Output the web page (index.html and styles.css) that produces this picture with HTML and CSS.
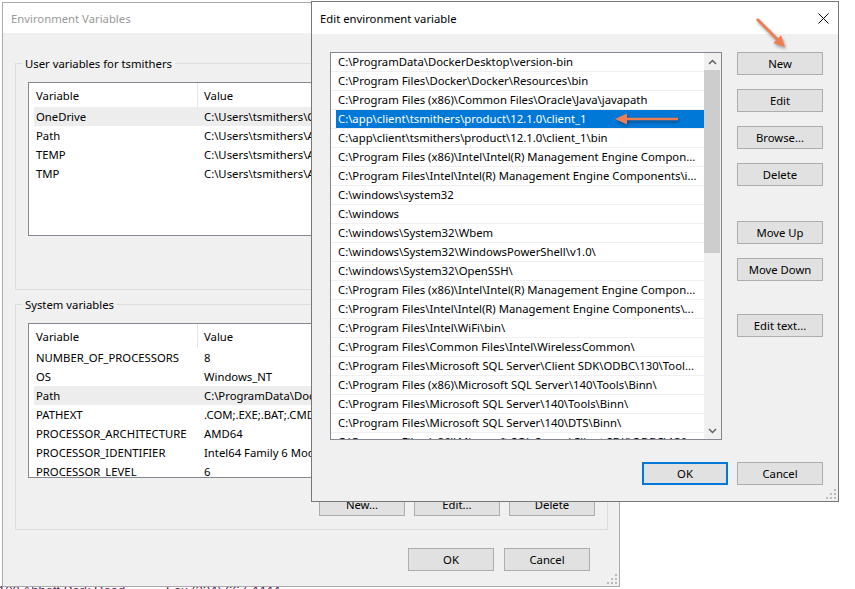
FILE: index.html
```html
<!DOCTYPE html>
<html lang="en">

<head>
    <meta charset="UTF-8">
    <meta name="viewport" content="width=device-width, initial-scale=1.0">
    <link rel="stylesheet" href="styles.css">
    <title>Environment Variables</title>
</head>

<body>
    <div class="page">
        <div class="address">
            <span class="street">100 Abbott Park Road</span>
            <span>Fax (224) 667-4444</span>
        </div>
    </div>

    <div class="window env-window">
        <div class="titlebar">
            <span class="title">Environment Variables</span>
        </div>
        <div class="env-body">
            <div class="group user-group">
                <span class="group-label">User variables for tsmithers</span>
                <div class="varlist">
                    <div class="var-head"><span class="col-name">Variable</span><span class="col-value">Value</span></div>
                    <div class="var-row hot"><span class="col-name">OneDrive</span><span class="col-value">C:\Users\tsmithers\OneDrive</span></div>
                    <div class="var-row"><span class="col-name">Path</span><span class="col-value">C:\Users\tsmithers\AppData\Local\Microsoft\WindowsApps;</span></div>
                    <div class="var-row"><span class="col-name">TEMP</span><span class="col-value">C:\Users\tsmithers\AppData\Local\Temp</span></div>
                    <div class="var-row"><span class="col-name">TMP</span><span class="col-value">C:\Users\tsmithers\AppData\Local\Temp</span></div>
                </div>
                <div class="group-buttons">
                    <div class="btn">New...</div>
                    <div class="btn">Edit...</div>
                    <div class="btn">Delete</div>
                </div>
            </div>

            <div class="group system-group">
                <span class="group-label">System variables</span>
                <div class="varlist">
                    <div class="var-head"><span class="col-name">Variable</span><span class="col-value">Value</span></div>
                    <div class="var-row"><span class="col-name">NUMBER_OF_PROCESSORS</span><span class="col-value">8</span></div>
                    <div class="var-row"><span class="col-name">OS</span><span class="col-value">Windows_NT</span></div>
                    <div class="var-row hot"><span class="col-name">Path</span><span class="col-value">C:\ProgramData\DockerDesktop\version-bin;C:\Program Files\Docker</span></div>
                    <div class="var-row"><span class="col-name">PATHEXT</span><span class="col-value">.COM;.EXE;.BAT;.CMD;.VBS;.VBE;.JS;.JSE;.WSF;.WSH;.MSC</span></div>
                    <div class="var-row"><span class="col-name">PROCESSOR_ARCHITECTURE</span><span class="col-value">AMD64</span></div>
                    <div class="var-row"><span class="col-name">PROCESSOR_IDENTIFIER</span><span class="col-value">Intel64 Family 6 Model 142 Stepping 10, GenuineIntel</span></div>
                    <div class="var-row"><span class="col-name">PROCESSOR_LEVEL</span><span class="col-value">6</span></div>
                </div>
                <div class="group-buttons">
                    <div class="btn">New...</div>
                    <div class="btn">Edit...</div>
                    <div class="btn">Delete</div>
                </div>
            </div>

            <div class="env-footer">
                <div class="btn">OK</div>
                <div class="btn">Cancel</div>
            </div>
        </div>
        <svg class="grip" width="10" height="10" viewBox="0 0 10 10">
            <rect x="8" y="0" width="2" height="2" />
            <rect x="4" y="4" width="2" height="2" />
            <rect x="8" y="4" width="2" height="2" />
            <rect x="0" y="8" width="2" height="2" />
            <rect x="4" y="8" width="2" height="2" />
            <rect x="8" y="8" width="2" height="2" />
        </svg>
    </div>

    <div class="window edit-window">
        <div class="titlebar">
            <span class="title">Edit environment variable</span>
            <svg class="close-icon" width="11" height="11" viewBox="0 0 11 11">
                <path d="M0.5 0.5 L10.5 10.5 M10.5 0.5 L0.5 10.5" stroke="#000" stroke-width="1" fill="none" />
            </svg>
        </div>
        <div class="edit-body">
            <div class="edit-main">
                <div class="path-list">
                    <div class="path-rows">
                        <div class="path-row">C:\ProgramData\DockerDesktop\version-bin</div>
                        <div class="path-row">C:\Program Files\Docker\Docker\Resources\bin</div>
                        <div class="path-row">C:\Program Files (x86)\Common Files\Oracle\Java\javapath</div>
                        <div class="path-row selected">C:\app\client\tsmithers\product\12.1.0\client_1</div>
                        <div class="path-row">C:\app\client\tsmithers\product\12.1.0\client_1\bin</div>
                        <div class="path-row">C:\Program Files (x86)\Intel\Intel(R) Management Engine Compon...</div>
                        <div class="path-row">C:\Program Files\Intel\Intel(R) Management Engine Components\i...</div>
                        <div class="path-row">C:\windows\system32</div>
                        <div class="path-row">C:\windows</div>
                        <div class="path-row">C:\windows\System32\Wbem</div>
                        <div class="path-row">C:\windows\System32\WindowsPowerShell\v1.0\</div>
                        <div class="path-row">C:\windows\System32\OpenSSH\</div>
                        <div class="path-row">C:\Program Files (x86)\Intel\Intel(R) Management Engine Compon...</div>
                        <div class="path-row">C:\Program Files\Intel\Intel(R) Management Engine Components\...</div>
                        <div class="path-row">C:\Program Files\Intel\WiFi\bin\</div>
                        <div class="path-row">C:\Program Files\Common Files\Intel\WirelessCommon\</div>
                        <div class="path-row">C:\Program Files\Microsoft SQL Server\Client SDK\ODBC\130\Tool...</div>
                        <div class="path-row">C:\Program Files (x86)\Microsoft SQL Server\140\Tools\Binn\</div>
                        <div class="path-row">C:\Program Files\Microsoft SQL Server\140\Tools\Binn\</div>
                        <div class="path-row">C:\Program Files\Microsoft SQL Server\140\DTS\Binn\</div>
                        <div class="path-row">C:\Program Files (x86)\Microsoft SQL Server\Client SDK\ODBC\130...</div>
                    </div>
                    <div class="scrollbar">
                        <div class="scroll-btn">
                            <svg width="9" height="6" viewBox="0 0 9 6">
                                <path d="M1 5 L4.5 1.5 L8 5" stroke="#606060" stroke-width="1.5" fill="none" />
                            </svg>
                        </div>
                        <div class="scroll-thumb"></div>
                        <div class="scroll-track"></div>
                        <div class="scroll-btn">
                            <svg width="9" height="6" viewBox="0 0 9 6">
                                <path d="M1 1 L4.5 4.5 L8 1" stroke="#606060" stroke-width="1.5" fill="none" />
                            </svg>
                        </div>
                    </div>
                </div>
                <div class="side-buttons">
                    <div class="btn">New</div>
                    <div class="btn">Edit</div>
                    <div class="btn">Browse...</div>
                    <div class="btn">Delete</div>
                    <div class="btn move-up">Move Up</div>
                    <div class="btn">Move Down</div>
                    <div class="btn edit-text">Edit text...</div>
                </div>
            </div>
            <div class="edit-footer">
                <div class="btn default">OK</div>
                <div class="btn">Cancel</div>
            </div>
        </div>
        <svg class="grip" width="10" height="10" viewBox="0 0 10 10">
            <rect x="8" y="0" width="2" height="2" />
            <rect x="4" y="4" width="2" height="2" />
            <rect x="8" y="4" width="2" height="2" />
            <rect x="0" y="8" width="2" height="2" />
            <rect x="4" y="8" width="2" height="2" />
            <rect x="8" y="8" width="2" height="2" />
        </svg>
    </div>

    <!-- annotation arrows drawn over the screenshot -->
    <svg class="callout callout-row" width="80" height="22" viewBox="0 0 80 22">
        <path d="M5 10 L17 4.5 L17 8.7 L68 8.7 L68 11.3 L17 11.3 L17 15.5 Z" />
    </svg>
    <svg class="callout callout-new" width="45" height="45" viewBox="0 0 45 45">
        <line x1="7" y1="7" x2="28" y2="28" stroke="#ee7d52" stroke-width="2.8" />
        <path d="M35 35 L23.3 31.1 L31.1 23.3 Z" />
    </svg>
</body>

</html>
```

FILE: styles.css
```css
* {
    margin: 0;
    padding: 0;
    box-sizing: border-box;
}

body {
    position: relative;
    width: 855px;
    height: 589px;
    overflow: hidden;
    background-color: #fff;
    font-family: "Noto Sans", sans-serif;
    font-size: 11.3px;
    color: #000;
}

/* web page behind the windows */
.page {
    padding-top: 583px;
    font-family: "Liberation Sans", Arial, sans-serif;
    font-size: 13px;
    color: #5a1f5e;
}

.address {
    display: flex;
    white-space: nowrap;
}

.street {
    width: 168px;
    margin-left: -2px;
}

/* windows */
.window {
    position: absolute;
    background-color: #f0f0f0;
}

.env-window {
    left: 2px;
    top: 2px;
    width: 618px;
    height: 585px;
    border: 1px solid #aaaaaa;
}

.edit-window {
    left: 311px;
    top: 1px;
    width: 528px;
    height: 501px;
    border: 1px solid #777777;
}

.titlebar {
    display: flex;
    align-items: center;
    justify-content: space-between;
    background-color: #fff;
    padding: 0 9px 0 8px;
}

.env-window .titlebar {
    height: 30px;
    color: #999999;
}

.edit-window .titlebar {
    height: 32px;
}

.close-icon {
    display: block;
}

.grip {
    position: absolute;
    right: 2px;
    bottom: 2px;
    fill: #bcbcbc;
}

/* buttons */
.btn {
    width: 86px;
    height: 23px;
    display: flex;
    align-items: center;
    justify-content: center;
    background-color: #e1e1e1;
    border: 1px solid #adadad;
    white-space: nowrap;
}

.btn.default {
    border: 2px solid #0078d7;
}

/* Environment Variables window */
.env-body {
    padding: 30px 11px 0 12px;
}

.group {
    border: 1px solid #dcdcdc;
    padding: 0 12px 13px;
}

.user-group {
    padding-bottom: 15px;
}

.group + .group {
    margin-top: 14px;
}

.group-label {
    display: block;
    width: max-content;
    margin: -8px 0 0 -6px;
    padding: 0 3px;
    line-height: 16px;
    background-color: #f0f0f0;
}

.varlist {
    margin-top: 10px;
    height: 154px;
    overflow: hidden;
    background-color: #fff;
    border: 1px solid #828790;
}

.system-group .varlist {
    height: 155px;
}

.var-head {
    display: flex;
    height: 24px;
}

.var-head .col-name {
    width: 169px;
    padding-left: 7px;
    display: flex;
    align-items: center;
    border-right: 1px solid #e5e5e5;
}

.var-head .col-value {
    display: flex;
    align-items: center;
    padding-left: 6px;
}

.var-row {
    display: flex;
    align-items: center;
    height: 19px;
    margin-left: 5px;
    white-space: nowrap;
}

.var-row.hot {
    background-color: #ededed;
}

.var-row .col-name {
    width: 163px;
    flex-shrink: 0;
    padding-left: 2px;
}

.var-row .col-value {
    padding-left: 7px;
}

.group-buttons {
    display: flex;
    justify-content: flex-end;
    gap: 9px;
    margin-top: 15px;
}

.env-footer {
    display: flex;
    justify-content: flex-end;
    gap: 10px;
    margin-top: 18px;
    padding-right: 18px;
}

/* Edit environment variable window */
.edit-body {
    padding: 18px 15px 0 18px;
}

.edit-main {
    display: flex;
    gap: 15px;
}

.path-list {
    display: flex;
    width: 392px;
    height: 388px;
    background-color: #fff;
    border: 1px solid #828790;
}

.path-rows {
    flex: 1;
    min-width: 0;
    overflow: hidden;
}

.path-row {
    height: 19px;
    line-height: 18px;
    padding: 0 5px 0 7px;
    border-bottom: 1px solid #f0f0f0;
    white-space: nowrap;
    overflow: hidden;
    text-overflow: ellipsis;
}

.path-row.selected {
    background: linear-gradient(to right, transparent 5px, #0078d7 5px);
    color: #fff;
}

.scrollbar {
    display: flex;
    flex-direction: column;
    width: 17px;
    background-color: #f0f0f0;
}

.scroll-btn {
    height: 17px;
    display: flex;
    align-items: center;
    justify-content: center;
}

.scroll-thumb {
    height: 183px;
    margin: 0 1px 0 0;
    background-color: #cdcdcd;
}

.scroll-track {
    flex: 1;
}

.side-buttons {
    display: flex;
    flex-direction: column;
    gap: 14px;
}

.side-buttons .move-up {
    margin-top: 21px;
}

.side-buttons .edit-text {
    margin-top: 19px;
}

.edit-footer {
    display: flex;
    justify-content: flex-end;
    gap: 9px;
    margin-top: 22px;
}

/* orange annotation arrows */
.callout {
    position: absolute;
    fill: #ee7d52;
    filter: drop-shadow(1px 2px 1.5px rgba(0, 0, 0, 0.35));
}

.callout-row {
    left: 610px;
    top: 109px;
}

.callout-new {
    left: 750px;
    top: 12px;
}
```
